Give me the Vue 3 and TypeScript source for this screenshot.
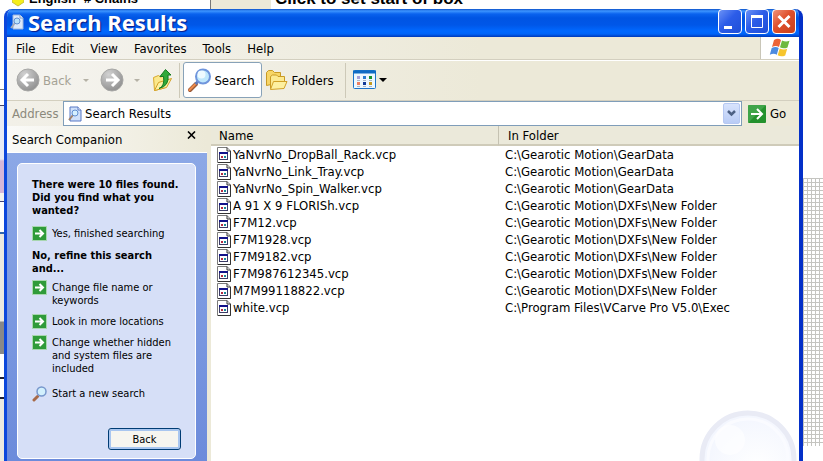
<script setup lang="ts">
import { ref } from 'vue'

interface FoundFile {
  name: string
  folder: string
}

const gearData = 'C:\\Gearotic Motion\\GearData'
const newFolder = 'C:\\Gearotic Motion\\DXFs\\New Folder'

const files: FoundFile[] = [
  { name: 'YaNvrNo_DropBall_Rack.vcp', folder: gearData },
  { name: 'YaNvrNo_Link_Tray.vcp', folder: gearData },
  { name: 'YaNvrNo_Spin_Walker.vcp', folder: gearData },
  { name: 'A 91 X 9 FLORISh.vcp', folder: newFolder },
  { name: 'F7M12.vcp', folder: newFolder },
  { name: 'F7M1928.vcp', folder: newFolder },
  { name: 'F7M9182.vcp', folder: newFolder },
  { name: 'F7M987612345.vcp', folder: newFolder },
  { name: 'M7M99118822.vcp', folder: newFolder },
  { name: 'white.vcp', folder: 'C:\\Program Files\\VCarve Pro V5.0\\Exec' },
]

const menus = ['File', 'Edit', 'View', 'Favorites', 'Tools', 'Help']
const refinements = [
  'Change file name or keywords',
  'Look in more locations',
  'Change whether hidden and system files are included',
]
const address = ref('Search Results')
</script>

<template>
  <div class="desktop">
    <div class="behind" aria-hidden="true">
      <div class="behind-top">
        <span class="behind-tree">
          <svg class="bulb" width="12" height="16" viewBox="0 0 12 16"><path d="M6 2l6 6v3l-6 4-6-4V8z" fill="#f4ee1c" stroke="#c8c13a" /></svg>
          English- # Chains
        </span>
        <span class="behind-hint">Click to set start of box</span>
      </div>
      <div class="behind-left"></div>
      <div class="behind-grid"></div>
    </div>

    <main class="window">
      <header class="titlebar">
        <svg class="title-icon" width="14" height="16" viewBox="0 0 14 16">
          <path d="M3 1h7l3 3v11H3z" fill="#dce9fb" stroke="#9db6dc" />
          <path d="M10 1v3h3" fill="#fff" stroke="#7f9cc8" />
          <path d="M5 9l-4 5" stroke="#a5a9b5" stroke-width="2" />
          <circle cx="7" cy="7" r="3" fill="#b9e2fb" stroke="#628fd0" />
        </svg>
        <h1>Search Results</h1>
        <div class="caption-buttons">
          <button class="cap" aria-label="Minimize">
            <svg width="22" height="23" viewBox="0 0 22 23"><path d="M5 17.500h8" stroke="#fff" stroke-width="3" /></svg>
          </button>
          <button class="cap" aria-label="Maximize">
            <svg width="22" height="23" viewBox="0 0 22 23"><path d="M5.500 6v11.500h11V6" fill="none" stroke="#fff" /><path d="M5 6.500h12" stroke="#fff" stroke-width="3" /></svg>
          </button>
          <button class="cap close" aria-label="Close">
            <svg width="22" height="23" viewBox="0 0 22 23"><path d="M5.500 6l11 11M16.500 6l-11 11" stroke="#fff" stroke-width="3" /></svg>
          </button>
        </div>
      </header>

      <nav class="menubar">
        <button v-for="m in menus" :key="m" class="menu">{{ m }}</button>
        <div class="brand">
          <svg width="22" height="20" viewBox="0 0 22 20">
            <path d="M5 2q4-2.500 7 0l-2 7q-3-2-7 0z" fill="#ec6337" />
            <path d="M13 2.500q4 2 7.500.3l-2 6.700q-4 1.800-7.500-.2z" fill="#6fb93f" />
            <path d="M2.700 10q4-2 7 0l-1.900 6.800q-3-2-7 0z" fill="#4c8be0" />
            <path d="M10.700 10.500q4 2 7.500.3l-2 6.700q-4 1.800-7.500-.2z" fill="#f7c52c" />
          </svg>
        </div>
      </nav>

      <div class="toolbar">
        <button class="tool nav" disabled>
          <svg width="24" height="24" viewBox="0 0 24 24">
            <defs>
              <radialGradient id="disc" cx="35%" cy="25%" r="80%"><stop offset="0" stop-color="#d2d2d2" /><stop offset="1" stop-color="#8e8e8e" /></radialGradient>
            </defs>
            <circle cx="12" cy="12" r="11" fill="url(#disc)" stroke="#a7a7a5" />
            <path d="M18 12H7M12 6l-6 6 6 6" fill="none" stroke="#fff" stroke-width="3" />
          </svg>
          <span>Back</span>
        </button>
        <button class="drop" disabled aria-label="Back history"><i class="caret"></i></button>
        <button class="tool" disabled aria-label="Forward">
          <svg width="24" height="24" viewBox="0 0 24 24">
            <circle cx="12" cy="12" r="11" fill="url(#disc)" stroke="#a7a7a5" />
            <path d="M6 12h11M12 6l6 6-6 6" fill="none" stroke="#fff" stroke-width="3" />
          </svg>
        </button>
        <button class="drop next" disabled aria-label="Forward history"><i class="caret"></i></button>
        <button class="tool up" aria-label="Up">
          <svg width="21" height="24" viewBox="0 0 21 24">
            <path d="M1.500 9.500l5-2 2 1.500 4-1v12l-10 2.500z" fill="#fbe88c" stroke="#d8a92e" />
            <path d="M2.500 22.500l4-8 13-4-5 9z" fill="#fdf2a6" stroke="#d3a026" />
            <path d="M7 20.500Q13 18 11.500 8.500H8L13.500 1.500 19 7h-3q1.500 11-9 13.500z" fill="#2fa93a" stroke="#157a20" />
          </svg>
        </button>
        <i class="rule"></i>
        <button class="tool pressed">
          <svg width="25" height="26" viewBox="0 0 25 26">
            <path d="M9 17l-6 6" stroke="#9b5a38" stroke-width="4" stroke-linecap="round" />
            <path d="M8.500 17l-6 6" stroke="#f08a4a" stroke-width="2" stroke-linecap="round" />
            <path d="M11.500 14l-3 3" stroke="#5f79b8" stroke-width="3" />
            <circle cx="16" cy="9.500" r="7" fill="#bfe7fc" stroke="#6f95dc" stroke-width="2" />
            <circle cx="14.500" cy="7.500" r="4" fill="#eefaff" />
          </svg>
          <span>Search</span>
        </button>
        <button class="tool folders">
          <svg width="23" height="22" viewBox="0 0 23 22">
            <path d="M1.500 16.500v-13l2-2h4l2 2h6v10z" fill="#f7d566" stroke="#c99a24" />
            <path d="M5.500 19.500V7.500l2-1.500h4l1.500 1.500h6.500v9z" fill="#fce990" stroke="#c99a24" />
            <path d="M5.500 20.500l3-8h13.500l-3 7z" fill="#fdf0a0" stroke="#d1a127" />
          </svg>
          <span>Folders</span>
        </button>
        <i class="rule views-rule"></i>
        <button class="tool views" aria-label="Views">
          <svg width="23" height="20" viewBox="0 0 23 20">
            <rect x="0.500" y="0.500" width="22" height="18" rx="1" fill="#eef8fe" stroke="#1c74c9" />
            <path d="M0 2h23" stroke="#0f6bc4" stroke-width="3" />
            <path d="M4 6h3v3H4z" fill="#a8a0d8" /><path d="M10 6h3v3h-3z" fill="#287bd0" /><path d="M16 6h3v3h-3z" fill="#18932c" />
            <path d="M4 12h3v3H4z" fill="#ee7f60" /><path d="M10 12h3v3h-3z" fill="#123a98" /><path d="M16 12h3v3h-3z" fill="#c49a20" />
            <path d="M4 10.500h3m3 0h3m3 0h3M4 16.500h3m3 0h3m3 0h3" stroke="#a9b6c6" />
          </svg>
          <i class="caret dark"></i>
        </button>
      </div>

      <form class="address" @submit.prevent>
        <label for="address">Address</label>
        <div class="field">
          <svg width="16" height="16" viewBox="0 0 16 16">
            <path d="M3 1h8l3 3v11H3z" fill="#cfe0fa" stroke="#5878c4" />
            <path d="M11 1v3h3" fill="#fff" stroke="#5878c4" />
            <path d="M6 9l-4 5" stroke="#a0826a" stroke-width="2" />
            <circle cx="8" cy="7" r="3" fill="#d6f0ff" stroke="#628fd0" />
          </svg>
          <input id="address" v-model="address" type="text" />
          <button type="button" class="expand" aria-label="Show addresses">
            <svg width="9" height="7" viewBox="0 0 9 7"><path d="M1 1l3.500 3.500L8 1" fill="none" stroke="#4d6185" stroke-width="2.500" /></svg>
          </button>
        </div>
        <button class="go">
          <svg width="18" height="18" viewBox="0 0 18 18">
            <rect width="18" height="18" rx="1" fill="#23912d" />
            <path d="M0 0h18L0 18z" fill="#5cb865" opacity=".5" />
            <path d="M3 9h11M9 4l5 5-5 5" fill="none" stroke="#fff" stroke-width="2" />
          </svg>
          <span>Go</span>
        </button>
      </form>

      <div class="content">
        <aside class="companion">
          <div class="companion-head">
            <h2>Search Companion</h2>
            <button aria-label="Close Search Companion">
              <svg width="9" height="8" viewBox="0 0 9 8"><path d="M1 .5l7 7M8 .5l-7 7" stroke="#000" stroke-width="1.600" /></svg>
            </button>
          </div>
          <div class="companion-body">
            <div class="card">
              <h3>There were 10 files found. Did you find what you wanted?</h3>
              <ul>
                <li>
                  <svg width="15" height="15" viewBox="0 0 15 15"><rect x=".5" y=".5" width="14" height="14" fill="#2f9b3a" stroke="#a8d6b0" /><path d="M3 7.500h8M7.500 4l3.500 3.500L7.500 11" fill="none" stroke="#fff" stroke-width="2" /></svg>
                  <a href="#done">Yes, finished searching</a>
                </li>
              </ul>
              <h3 class="refine">No, refine this search and...</h3>
              <ul class="choices">
                <li v-for="r in refinements" :key="r">
                  <svg width="15" height="15" viewBox="0 0 15 15"><rect x=".5" y=".5" width="14" height="14" fill="#2f9b3a" stroke="#a8d6b0" /><path d="M3 7.500h8M7.500 4l3.500 3.500L7.500 11" fill="none" stroke="#fff" stroke-width="2" /></svg>
                  <a href="#refine">{{ r }}</a>
                </li>
              </ul>
              <ul class="restart">
                <li>
                  <svg width="15" height="16" viewBox="0 0 15 16">
                    <path d="M5.500 10.500L2 14" stroke="#a86a48" stroke-width="3" stroke-linecap="round" />
                    <circle cx="9.500" cy="5.500" r="4.500" fill="#d2f0fd" stroke="#7797cc" stroke-width="1.500" />
                  </svg>
                  <a href="#new">Start a new search</a>
                </li>
              </ul>
              <button class="back">Back</button>
            </div>
          </div>
        </aside>

        <section class="results">
          <table>
            <thead>
              <tr><th class="col-name">Name</th><th>In Folder</th></tr>
            </thead>
            <tbody>
              <tr v-for="f in files" :key="f.name">
                <td>
                  <div class="file">
                    <svg width="14" height="16" viewBox="0 0 14 16">
                      <path d="M.5.5h9.500l3.500 3.500v11.500H.5z" fill="#fff" stroke="#7b7b7b" />
                      <path d="M10 .5V4h3.500v11.500H1" fill="none" stroke="#333" />
                      <rect x="2.500" y="5.500" width="8" height="7" fill="#fff" stroke="#3b3b66" />
                      <path d="M2 6h9" stroke="#12128a" stroke-width="2" />
                      <path d="M4 10h2" stroke="#b52a42" stroke-width="2" /><path d="M7 10h2" stroke="#188a9a" stroke-width="2" />
                    </svg>
                    <span>{{ f.name }}</span>
                  </div>
                </td>
                <td>{{ f.folder }}</td>
              </tr>
            </tbody>
          </table>
          <svg class="lens" width="98" height="98" viewBox="0 0 98 98" aria-hidden="true">
            <defs>
              <radialGradient id="glass" cx="60%" cy="60%" r="60%"><stop offset="0" stop-color="#fff" /><stop offset="1" stop-color="#f3f6fe" /></radialGradient>
            </defs>
            <circle cx="49" cy="49" r="46" fill="url(#glass)" stroke="#e9ebf5" stroke-width="5" />
            <circle cx="49" cy="49" r="40" fill="none" stroke="#fafbff" stroke-width="3" />
            <circle cx="31" cy="30" r="15" fill="#fff" opacity=".6" />
          </svg>
        </section>
      </div>
    </main>
  </div>
</template>

<style>
body {
  margin: 0;
  overflow: hidden;
}
</style>

<style scoped>
* {
  box-sizing: border-box;
}
.desktop {
  position: relative;
  height: 100vh;
  padding: 9px 20px 0 4px;
  background: #fff;
  color: #000;
  font: 13px/17px 'DejaVu Sans Condensed', 'DejaVu Sans', sans-serif;
  overflow: hidden;
}
h1, h2, h3, ul {
  margin: 0;
  padding: 0;
  font: inherit;
}
svg {
  display: block;
  flex: none;
}
button {
  margin: 0;
  padding: 0;
  border: 0;
  background: none;
  color: inherit;
  font: inherit;
}

.behind {
  position: absolute;
  inset: 0;
}
.behind-top {
  display: flex;
  height: 20px;
  background: #f3f3ef;
  font: bold 13px/16px 'Liberation Sans', sans-serif;
  margin-top: -9px;
}
.behind-tree {
  display: flex;
  gap: 5px;
  width: 211px;
  padding-left: 12px;
  background: #fff;
  border-right: 1px solid #777;
}
.behind-hint {
  flex: 1;
  padding-left: 64px;
  background: linear-gradient(90deg, #ece9d8 60px, #fff 60px);
  font-size: 17px;
}
.behind-left {
  position: absolute;
  left: 0;
  top: 9px;
  bottom: 0;
  width: 5px;
  background: linear-gradient(#fff 80px, #777 80px 81px, #fff 81px 96px, #446 96px 97px, #e8ebf5 97px 150px, #d5b6d8 152px 184px, #f3f3ef 184px 192px, #447 192px 193px, #fff 193px 223px, #36a 223px 225px, #eceae0 225px 312px, #888 313px 345px, #fff 345px 368px, #223 368px 370px, #fff 370px 388px, #223 388px 390px, #eceae0 390px);
}
.behind-grid {
  position: absolute;
  right: 0;
  top: 178px;
  width: 20px;
  height: 268px;
  background:
    linear-gradient(#c4c4c0 1px, transparent 1px) 0 0 / 4px 4px,
    linear-gradient(90deg, #c4c4c0 1px, transparent 1px) 0 0 / 4px 4px;
}

.window {
  position: relative;
  display: flex;
  flex-direction: column;
  height: 100%;
  border: solid #0c47dc;
  border-width: 0 4px 0 3px;
  border-right-color: #0430c8;
  border-radius: 8px 8px 0 0;
  background: #ece9d8;
  overflow: hidden;
}

.titlebar {
  display: flex;
  align-items: center;
  flex: none;
  height: 28px;
  padding: 0 3px 3px;
  background: linear-gradient(#0a50c8 0, #3d95ff 2px, #0a62ee 5px, #0054e3 9px, #0057e8 16px, #0068ff 22px, #0064f8 25px, #0038b8 28px);
}
h1 {
  flex: 1;
  margin-left: 4px;
  color: #fff;
  font: bold 22px/24px 'Noto Sans', sans-serif;
  text-shadow: 1px 1px 1px #0a1883;
}
.caption-buttons {
  display: flex;
  gap: 3px;
}
.cap {
  width: 24px;
  height: 25px;
  border: 1px solid #fff;
  border-radius: 4px;
  background: linear-gradient(135deg, #6b92f6, #2c5ce8 45%, #1f4fd8);
}
.cap.close {
  background: linear-gradient(135deg, #f0937a, #df4f2b 45%, #c8401c);
}

.menubar {
  display: flex;
  align-items: center;
  flex: none;
  height: 23px;
  padding-left: 9px;
  gap: 16px;
  background: linear-gradient(90deg, #f5f4f0, #ece9d8 60%);
  border-bottom: 1px solid #d3cfbf;
}
.brand {
  display: flex;
  align-items: center;
  justify-content: center;
  align-self: stretch;
  width: 39px;
  margin-left: auto;
  border-left: 1px solid #c9c6b8;
  background: #fff;
}

.toolbar {
  display: flex;
  align-items: center;
  flex: none;
  height: 41px;
  padding: 1px 9px 2px;
  border-top: 1px solid #fff;
  border-bottom: 1px solid #d3cfbf;
  background: linear-gradient(90deg, #f5f4f0, #ece9d8 60%);
}
.tool {
  display: flex;
  align-items: center;
  gap: 3px;
}
.nav {
  color: #a5a295;
}
.drop {
  display: flex;
  justify-content: center;
  width: 29px;
}
.drop.next {
  width: 25px;
}
.caret {
  border: solid transparent;
  border-width: 3px 3px 0;
  border-top-color: #b5b2a6;
}
.caret.dark {
  border-width: 4px 4px 0;
  border-top-color: #000;
}
.up {
  margin-left: 3px;
}
.rule {
  align-self: stretch;
  width: 1px;
  margin: 1px 3px 0 6px;
  background: #cdc9b8;
}
.pressed {
  align-self: stretch;
  width: 79px;
  padding-left: 3px;
  gap: 2px;
  border: 1px solid #88a2b8;
  border-radius: 3px;
  background: #fff;
}
.folders {
  margin-left: 3px;
}
.views-rule {
  margin-left: 11px;
}
.views {
  margin-left: 4px;
}

.address {
  display: flex;
  align-items: center;
  flex: none;
  height: 25px;
  padding-left: 5px;
  background: linear-gradient(90deg, #f2f0e8, #ece9d8 60%);
}
.address label {
  width: 51px;
  color: #8b897c;
}
.field {
  display: flex;
  align-items: center;
  flex: 1;
  height: 25px;
  padding: 1px 1px 1px 3px;
  border: 1px solid #7f9db9;
  background: #fff;
}
.field input {
  flex: 1;
  min-width: 0;
  padding: 0 0 0 2px;
  border: 0;
  outline: 0;
  background: none;
  color: #000;
  font: inherit;
}
.expand {
  display: flex;
  align-items: center;
  justify-content: center;
  align-self: stretch;
  width: 17px;
  border: 1px solid #b6c8f2;
  border-radius: 2px;
  background: linear-gradient(#d8e3fc, #b9ccf6);
}
.go {
  display: flex;
  align-items: center;
  gap: 4px;
  width: 57px;
  padding-left: 6px;
}

.content {
  display: flex;
  flex: 1;
  min-height: 0;
}
.companion {
  display: flex;
  flex-direction: column;
  flex: none;
  width: 200px;
}
.companion-head {
  display: flex;
  justify-content: space-between;
  height: 27px;
  padding: 5px 11px 0 5px;
  border-bottom: 1px solid #fff;
  background: linear-gradient(90deg, #fafaf8, #ece9d8);
}
.companion-head button {
  align-self: flex-start;
}
.companion-body {
  flex: 1;
  padding: 10px 11px 0 10px;
  background: linear-gradient(#8ca8e6, #6c8bdb);
}
.card {
  display: flex;
  flex-direction: column;
  height: 296px;
  padding: 14px 14px 8px;
  border: 1px solid #fff;
  border-radius: 5px;
  background: #d6dff7;
  font-size: 11px;
  line-height: 13px;
}
.card h3 {
  margin: 0 -8px 10px 0;
  font-weight: bold;
}
.card .refine {
  margin: 9px 0 6px;
}
.card ul {
  display: flex;
  flex-direction: column;
  gap: 8px;
  list-style: none;
}
.card li {
  display: flex;
  gap: 5px;
}
.card li svg {
  margin: -1px 0;
}
.card a {
  color: #000;
  text-decoration: none;
}
.card .restart {
  margin-top: 12px;
}
.back {
  align-self: flex-end;
  width: 73px;
  height: 22px;
  margin-top: auto;
  border: 1px solid #003c74;
  border-radius: 3px;
  background: #f6f5f0;
  box-shadow: inset 0 0 0 2px #a9c6f0;
}

.results {
  position: relative;
  flex: 1;
  min-width: 0;
  margin-left: 4px;
  background: #fff;
  overflow: hidden;
}
table {
  width: 100%;
  border-collapse: separate;
  border-spacing: 0;
  table-layout: fixed;
}
th {
  height: 20px;
  padding: 1px 0 0 9px;
  border-bottom: 2px solid #cfcbb9;
  background: #ebe9da;
  font-weight: normal;
  text-align: left;
}
th.col-name {
  width: 288px;
  padding-left: 8px;
  border-right: 1px solid #c5c2b2;
}
td {
  height: 17px;
  padding: 0 0 0 6px;
  white-space: nowrap;
}
.file {
  display: flex;
  align-items: center;
  gap: 2px;
}
.lens {
  position: absolute;
  right: 2px;
  bottom: -47px;
}
</style>
